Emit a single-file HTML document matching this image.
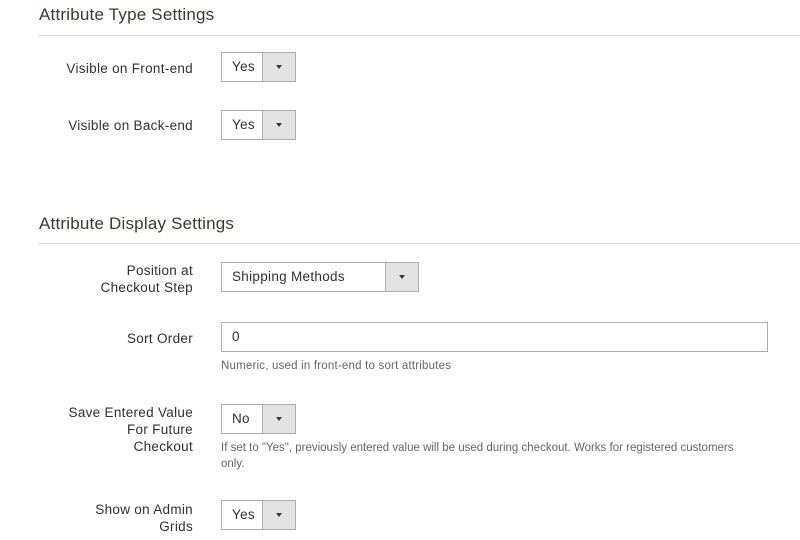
<!DOCTYPE html>
<html><head><style>
body{margin:0;width:800px;height:540px;background:#fff;font-family:"Liberation Sans",sans-serif;color:#303030;position:relative;overflow:hidden}
h2{position:absolute;margin:0;font-size:17px;font-weight:normal;color:#41362f;left:39px;letter-spacing:0.2px}
.hr{position:absolute;left:38px;right:0;height:1px;background:#d6d6d6}
.lbl{position:absolute;right:607px;text-align:right;font-size:13.5px;line-height:17px;color:#303030;letter-spacing:0.3px}
.sel{position:absolute;left:221px;height:28px;border:1px solid #adadad;background:#fff;font-size:13.5px;box-sizing:content-box;letter-spacing:0.3px}
.sel span{position:absolute;left:10px;top:6px}
.sel .b{position:absolute;right:0;top:0;width:32px;height:28px;background:#e3e3e3;border-left:1px solid #adadad}
.sel .b:after{content:"";position:absolute;left:13px;top:12px;border-left:3.5px solid transparent;border-right:3.5px solid transparent;border-top:4px solid #41362f}
.note{position:absolute;left:221px;font-size:11.5px;color:#666;line-height:16px;letter-spacing:0.2px;white-space:nowrap}
</style></head><body>
<h2 style="top:5px">Attribute Type Settings</h2>
<div class="hr" style="top:35px"></div>
<div class="lbl" style="top:60px">Visible on Front-end</div>
<div class="sel" style="top:52px;width:73px"><span>Yes</span><div class="b"></div></div>
<div class="lbl" style="top:117px">Visible on Back-end</div>
<div class="sel" style="top:110px;width:73px"><span>Yes</span><div class="b"></div></div>

<h2 style="top:214px">Attribute Display Settings</h2>
<div class="hr" style="top:243px"></div>
<div class="lbl" style="top:262px">Position at<br>Checkout Step</div>
<div class="sel" style="top:262px;width:196px"><span>Shipping Methods</span><div class="b"></div></div>
<div class="lbl" style="top:330px">Sort Order</div>
<div class="sel" style="top:322px;width:545px"><span>0</span></div>
<div class="note" style="top:358px">Numeric, used in front-end to sort attributes</div>
<div class="lbl" style="top:404px">Save Entered Value<br>For Future<br>Checkout</div>
<div class="sel" style="top:404px;width:73px"><span>No</span><div class="b"></div></div>
<div class="note" style="top:440px;letter-spacing:0">If set to "Yes", previously entered value will be used during checkout. Works for registered customers<br>only.</div>
<div class="lbl" style="top:501px">Show on Admin<br>Grids</div>
<div class="sel" style="top:500px;width:73px"><span>Yes</span><div class="b"></div></div>
</body></html>
